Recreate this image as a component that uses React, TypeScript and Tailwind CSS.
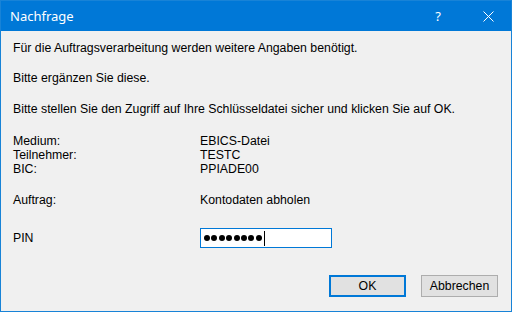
export default function App() {
  const rows = [
    ["Medium:", "EBICS-Datei"],
    ["Teilnehmer:", "TESTC"],
    ["BIC:", "PPIADE00"],
  ];

  return (
    <div className="w-[512px] h-[312px] flex flex-col border border-[#1883d7] bg-[#f0f0f0] text-[12.3px] leading-[14px] text-black font-['Liberation_Sans',Arial,sans-serif]">
      <div className="h-[30px] shrink-0 flex items-center bg-[#0078d7] text-white pl-[9px] font-['Noto_Sans','Open_Sans',sans-serif]">
        <span className="flex-1 text-[13px] leading-none">Nachfrage</span>
        <span className="w-[46px] text-center text-[13px] leading-none mr-[4px]">?</span>
        <span className="w-[46px] flex justify-center">
          <svg width="11" height="11" viewBox="0 0 11 11" fill="none" stroke="white" strokeWidth="1">
            <path d="M0.5 0.5 L10.5 10.5 M10.5 0.5 L0.5 10.5" />
          </svg>
        </span>
      </div>

      <div className="flex-1 flex flex-col pl-[12px] pt-[10px]">
        <p>Für die Auftragsverarbeitung werden weitere Angaben benötigt.</p>
        <p className="mt-[16px]">Bitte ergänzen Sie diese.</p>
        <p className="mt-[17px]">Bitte stellen Sie den Zugriff auf Ihre Schlüsseldatei sicher und klicken Sie auf OK.</p>

        <div className="mt-[18px] flex flex-col">
          {rows.map(([k, v]) => (
            <div key={k} className="flex">
              <span className="w-[187px]">{k}</span>
              <span>{v}</span>
            </div>
          ))}
        </div>

        <div className="mt-[17px] flex">
          <span className="w-[187px]">Auftrag:</span>
          <span>Kontodaten abholen</span>
        </div>

        <div className="mt-[21px] flex items-center">
          <span className="w-[187px]">PIN</span>
          <div className="w-[132px] h-[20px] border border-[#0078d7] bg-white flex items-center pl-[3px] gap-[1.4px]">
            {Array.from({ length: 8 }).map((_, i) => (
              <span key={i} className="w-[6px] h-[6px] rounded-full bg-black" />
            ))}
            <span className="ml-[1px] w-px h-[15px] bg-black" />
          </div>
        </div>

        <div className="mt-auto mb-[14px] mr-[13px] flex justify-end gap-[15px]">
          <button className="w-[77px] h-[22px] border-2 border-[#0078d7] bg-[#e1e1e1] leading-none">OK</button>
          <button className="w-[77px] h-[22px] border border-[#adadad] bg-[#e1e1e1] leading-none">Abbrechen</button>
        </div>
      </div>
    </div>
  );
}
